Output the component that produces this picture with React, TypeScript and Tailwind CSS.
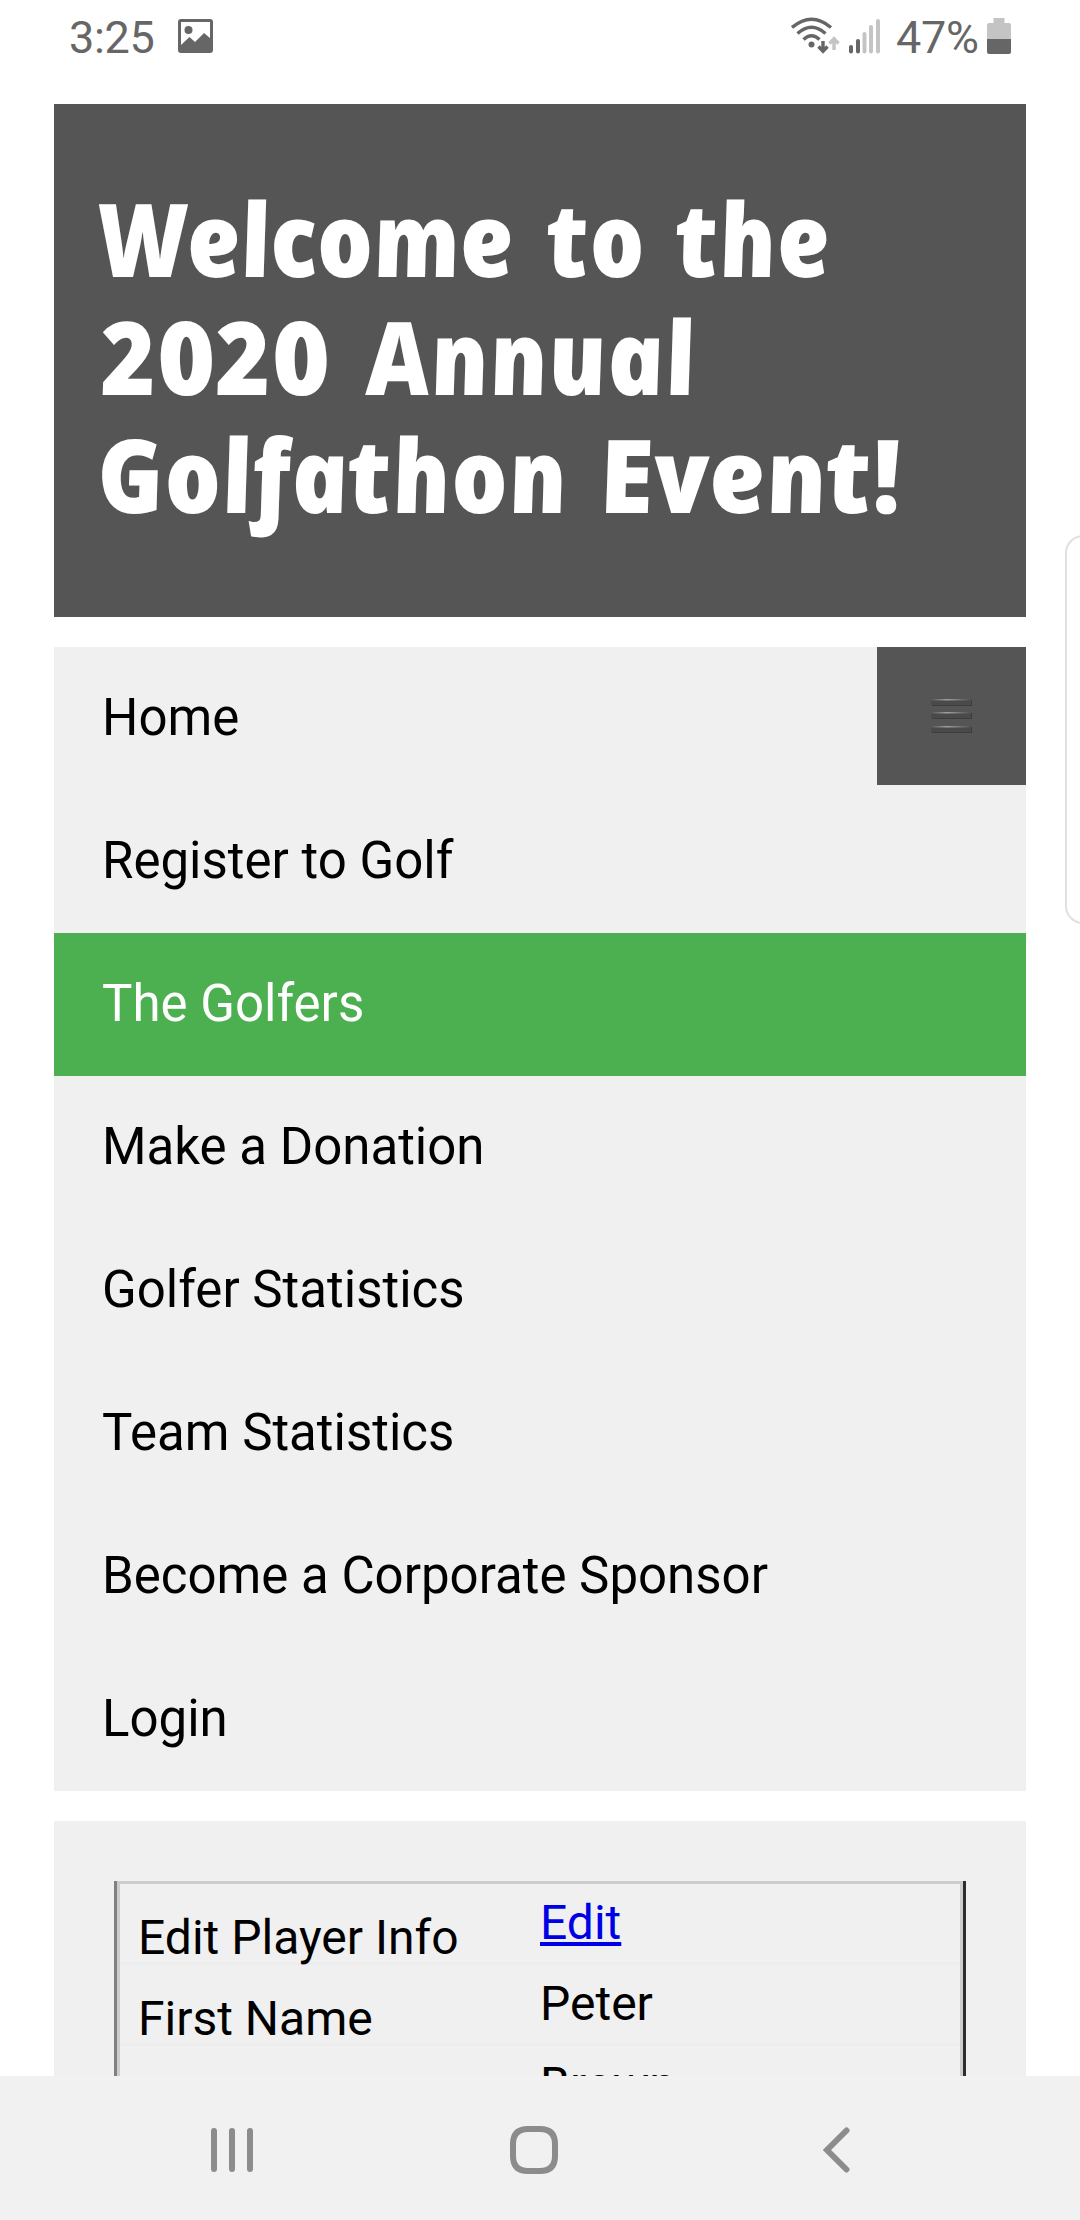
import React from "react";

const navItems = [
  "Home",
  "Register to Golf",
  "The Golfers",
  "Make a Donation",
  "Golfer Statistics",
  "Team Statistics",
  "Become a Corporate Sponsor",
  "Login",
];

function StatusBar() {
  return (
    <div className="flex h-[104px] shrink-0 items-start justify-between pr-[69px] pl-[69px] text-[45px] leading-[54px] text-[#666666]">
      <div className="flex pt-[10px]">
        <span className="w-[109px] pt-px tracking-[-0.3px] whitespace-nowrap">3:25</span>
        <svg className="mt-[9px] h-[34px] w-[35px]" viewBox="0 0 35 34">
          <path
            fillRule="evenodd"
            fill="#666"
            d="M3 0H32Q35 0 35 3V31Q35 34 32 34H3Q0 34 0 31V3Q0 0 3 0ZM3 3V26L11.500 18L17 23L26 14L32 19V3Z"
          />
          <circle cx="10.500" cy="11" r="4" fill="#666" />
        </svg>
      </div>
      <div className="flex pt-[10px]">
        <svg className="mt-[7px] mr-[9px] h-[37px] w-[49px]" viewBox="0 0 49 37" fill="none">
          <g stroke="#666" strokeWidth="3.400">
            <path d="M1 10.500Q20.500 -6 40 10.500" />
            <path d="M6.500 16.500Q20.500 4 34.500 16.500" />
            <path d="M12.500 22.500Q20.500 15 28.500 22.500" />
            <path d="M32 24V34M27.500 29.500L32 34.300L36.500 29.500" />
          </g>
          <circle cx="20.500" cy="27.500" r="3" fill="#666" />
          <path d="M43 33V22M38.500 26.500L43 21.800L47.500 26.500" stroke="#c4c4c4" strokeWidth="3.400" />
        </svg>
        <svg className="mt-[9px] mr-[15px] h-[35px] w-[32px]" viewBox="0 0 32 35">
          <rect x="0" y="26" width="4" height="8.500" rx="2" fill="#666" />
          <rect x="7" y="20" width="4" height="14.500" rx="2" fill="#666" />
          <rect x="13.500" y="13" width="4" height="21.500" rx="2" fill="#c4c4c4" />
          <rect x="20" y="6" width="4" height="28.500" rx="2" fill="#c4c4c4" />
          <rect x="27" y="0" width="4" height="34.500" rx="2" fill="#c4c4c4" />
        </svg>
        <span className="w-[91px] pt-px tracking-[-0.3px] whitespace-nowrap">47%</span>
        <svg className="mt-[8px] h-[36px] w-[24px]" viewBox="0 0 24 36">
          <path d="M6.500 0H17.500V5H22Q24 5 24 7V21H0V7Q0 5 2 5H6.500Z" fill="#c4c4c4" />
          <path d="M0 21H24V34Q24 36 22 36H2Q0 36 0 34Z" fill="#666" />
        </svg>
      </div>
    </div>
  );
}

const word = "inline-block shrink-0 origin-bottom-left skew-x-[10deg] whitespace-nowrap";

function Banner() {
  return (
    <header className="mx-[54px] h-[513px] shrink-0 bg-[#555555] pt-[75px]">
      <h1 className="font-['Open_Sans'] text-[102px] leading-[118px] font-extrabold text-white italic">
        <span className="flex h-[118px] pl-[53px]">
          <span className={`${word} w-[448px] scale-x-[0.925] tracking-[-1px]`}>Welcome</span>
          <span className={`${word} w-[129px] scale-x-[0.9]`}>to</span>
          <span className={`${word} scale-x-[0.91]`}>the</span>
        </span>
        <span className="flex h-[118px] pl-[55px]">
          <span className={`${word} w-[265px] scale-x-[0.97]`}>2020</span>
          <span className={`${word} scale-x-[0.93]`}>Annual</span>
        </span>
        <span className="flex h-[118px] pl-[52px]">
          <span className={`${word} w-[502px] scale-x-[0.928]`}>Golfathon</span>
          <span className={`${word} scale-x-[0.965]`}>Event!</span>
        </span>
      </h1>
    </header>
  );
}

function MenuIcon() {
  return (
    <svg className="h-[36px] w-[41px]" viewBox="0 0 41 36">
      <defs>
        <linearGradient id="shine" x1="0" x2="1" y1="0" y2="0">
          <stop offset="0" stopColor="#555" />
          <stop offset="0.400" stopColor="#a0a0a0" />
          <stop offset="1" stopColor="#505050" />
        </linearGradient>
      </defs>
      {[0, 13, 27].map((y) => (
        <g key={y}>
          <rect x="1" y={y + 1} width="40" height="6" fill="#3c3c3c" />
          <rect x="0" y={y} width="40" height="6" fill="#4a4a4a" />
          <rect x="0" y={y} width="40" height="1.500" fill="url(#shine)" />
        </g>
      ))}
    </svg>
  );
}

function Nav() {
  return (
    <nav className="relative mx-[54px] mt-[30px] shrink-0 bg-[#f0f0f0]">
      {navItems.map((item) => (
        <a
          key={item}
          className={
            item === "The Golfers"
              ? "flex h-[143px] items-center bg-[#4caf50] pl-[48px] text-[51px] text-white"
              : "flex h-[143px] items-center pl-[48px] text-[51px] text-black"
          }
        >
          {item}
        </a>
      ))}
      <button className="absolute top-0 right-0 flex h-[138px] w-[149px] items-center justify-center bg-[#555555] pt-[2px]">
        <MenuIcon />
      </button>
    </nav>
  );
}

function PlayerRow({ label, children }: { label?: string; children: React.ReactNode }) {
  return (
    <div className="grid h-[81px] grid-cols-[402px_1fr] border-b-[3px] border-[#ededed] pl-[18px] text-[48px] leading-[56px] text-black">
      <span className="pt-[26px] whitespace-nowrap">{label}</span>
      <span className="pt-[11px]">{children}</span>
    </div>
  );
}

function PlayerPanel() {
  return (
    <section className="mx-[54px] mt-[30px] h-[255px] shrink-0 overflow-hidden bg-[#f0f0f0] px-[60px] pt-[60px]">
      <div className="border-r-[3px] border-l-[3px] border-l-[#808080] border-r-[#2c2c2c]">
        <div className="border-x-[3px] border-t-[3px] border-[#cccccc]">
          <PlayerRow label="Edit Player Info">
            <a className="text-[#0000e6] underline decoration-[4px] underline-offset-[3px]">Edit</a>
          </PlayerRow>
          <PlayerRow label="First Name">Peter</PlayerRow>
          <PlayerRow>Brown</PlayerRow>
        </div>
      </div>
    </section>
  );
}

function SystemNav() {
  return (
    <footer className="flex h-[144px] shrink-0 items-center bg-[#f1f1f1] pt-[4px] pl-[211px]">
      <svg className="h-[48px] w-[42px]" viewBox="0 0 42 48" stroke="#8c8c8c" strokeWidth="6" strokeLinecap="round">
        <path d="M3 5V43M21 5V43M39 5V43" />
      </svg>
      <svg className="ml-[257px] h-[48px] w-[48px]" viewBox="0 0 48 48" fill="none" stroke="#8c8c8c" strokeWidth="6">
        <path d="M24 3H30Q45 3 45 18V30Q45 45 30 45H18Q3 45 3 30V18Q3 3 18 3Z" />
      </svg>
      <svg className="ml-[265px] h-[48px] w-[27px]" viewBox="0 0 27 48" fill="none" stroke="#8c8c8c" strokeWidth="6" strokeLinecap="round">
        <path d="M23.500 4.500L4 24L23.500 43.500" />
      </svg>
    </footer>
  );
}

export default function App() {
  return (
    <div className="relative flex h-[2220px] w-[1080px] flex-col overflow-hidden bg-white font-[Roboto,sans-serif]">
      <StatusBar />
      <Banner />
      <Nav />
      <PlayerPanel />
      <SystemNav />
      <div className="absolute top-[535px] -right-[14px] h-[389px] w-[29px] rounded-l-[18px] border-2 border-[#e0e0e0] bg-white" />
    </div>
  );
}
